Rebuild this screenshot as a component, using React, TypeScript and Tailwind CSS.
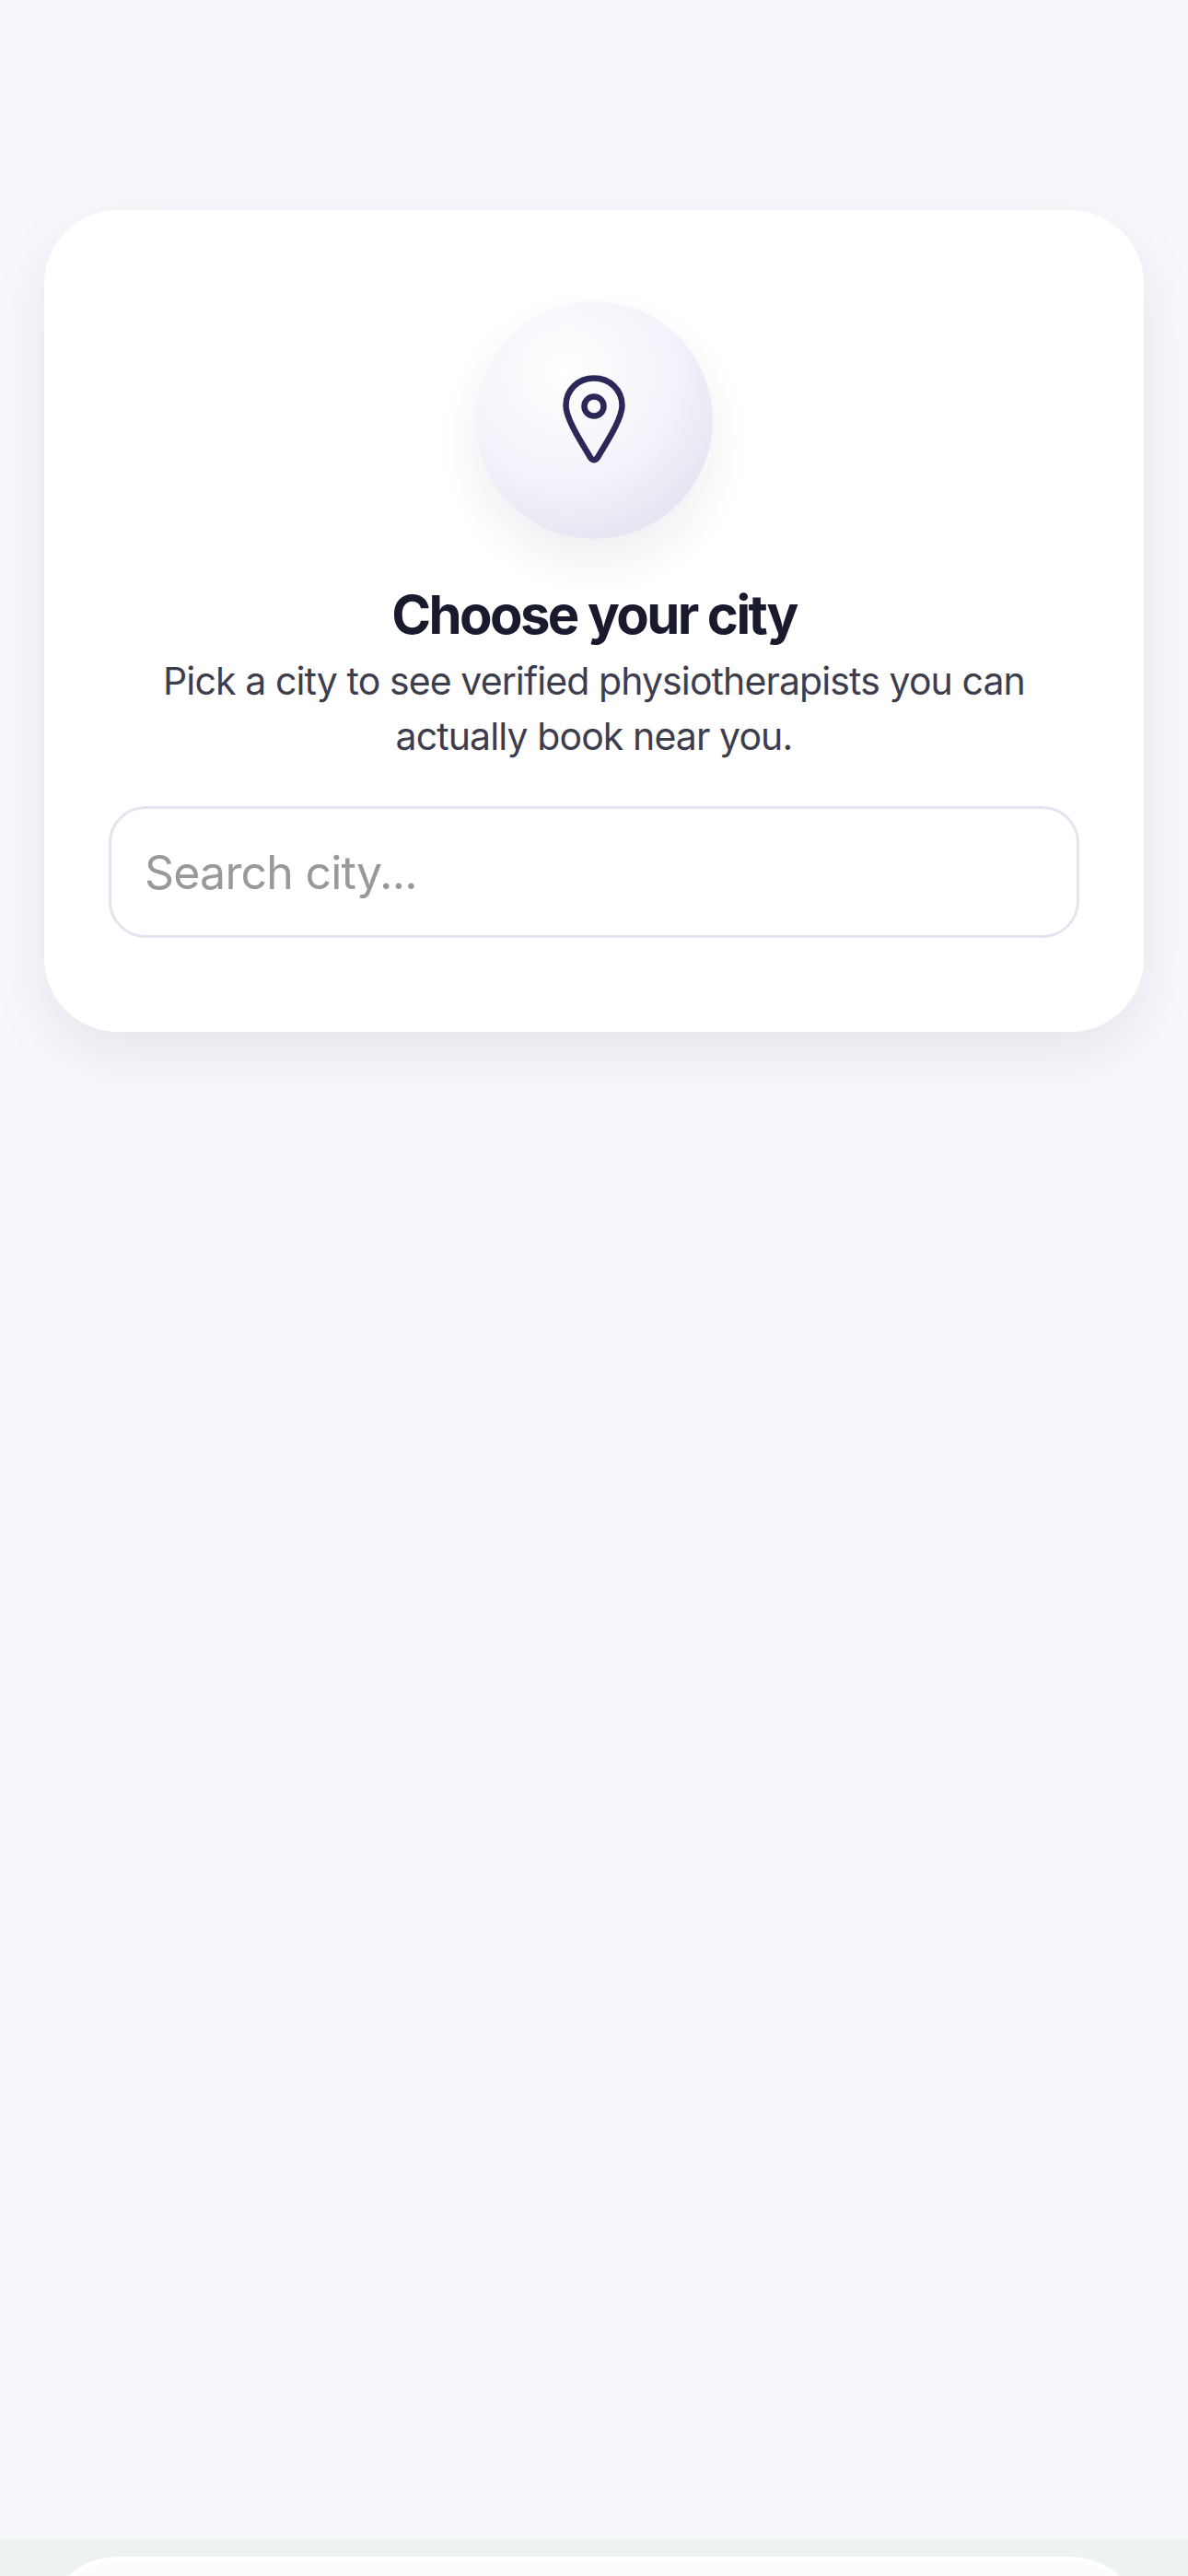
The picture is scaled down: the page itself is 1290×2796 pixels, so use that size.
export default function App() {
  return (
    <div className="h-[2796px] overflow-hidden flex flex-col bg-[#f7f7fc] font-['Inter',sans-serif]">
      <main className="flex-1 px-[48px] pt-[228px]">
        <section className="h-[892px] rounded-[80px] bg-white px-[70px] pt-[99px] flex flex-col items-center shadow-[0_24px_64px_rgba(30,30,70,0.08)]">
          <div className="w-[258px] h-[258px] shrink-0 rounded-full flex items-center justify-center bg-[radial-gradient(circle_at_38%_30%,#ffffff_0%,#f3f2fa_50%,#dddaec_100%)] shadow-[0_24px_48px_rgba(30,30,70,0.07)]">
            <svg width="68" height="96" viewBox="0 0 68 96" fill="none" stroke="#2b2857" strokeWidth="6.5" strokeLinejoin="round" className="-translate-y-[1px]">
              <path d="M34 3.500C16.500 3.500 3.500 16.500 3.500 33C3.500 48 21 74 30 89.500Q34 95 38 89.500C47 74 64.500 48 64.500 33C64.500 16.500 51.500 3.500 34 3.500Z" />
              <circle cx="34" cy="34" r="10.500" />
            </svg>
          </div>
          <h1 className="mt-[46px] text-[58px] leading-[72px] font-bold tracking-[-2.6px] text-[#1a1a2e] whitespace-nowrap">Choose your city</h1>
          <p className="mt-[6px] text-[41px] leading-[60px] tracking-[-0.9px] font-normal text-[#3d3d4e] text-center">
            Pick a city to see verified physiotherapists you can actually book near you.
          </p>
          <input
            readOnly
            placeholder="Search city..."
            className="mt-[46px] w-full shrink-0 h-[143px] rounded-[40px] border-[3px] border-[#e4e4f0] bg-white px-[36px] text-[50px] tracking-[-0.8px] text-[#1a1a2e] outline-none placeholder:text-[#999999]"
          />
        </section>
      </main>
      <footer className="h-[40px] shrink-0 px-[48px] pt-[19px] overflow-hidden bg-[#edf3f0]">
        <div className="h-[100px] rounded-t-[80px] border-t-[6px] border-white bg-[#fafdfb]"></div>
      </footer>
    </div>
  );
}
